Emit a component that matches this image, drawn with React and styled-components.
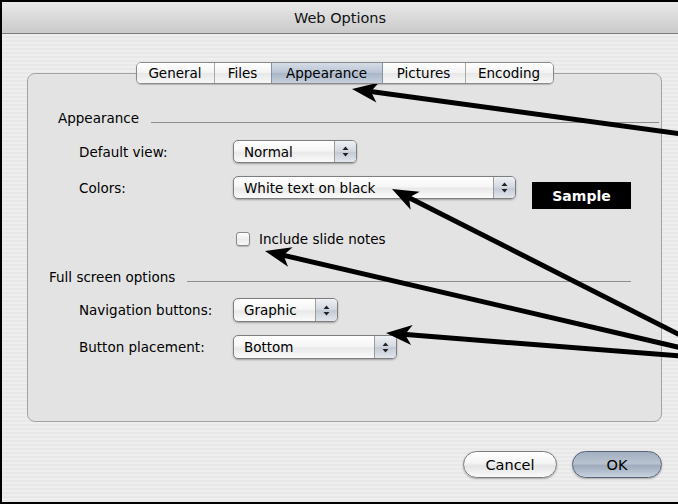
import React from "react";
import styled, { createGlobalStyle, css } from "styled-components";

const GlobalStyle = createGlobalStyle`
  html, body { margin: 0; padding: 0; background: #fff; }
  #root { width: 678px; height: 504px; }
`;

const TABS = [
  { label: "General", w: 77 },
  { label: "Files", w: 57 },
  { label: "Appearance", w: 111, active: true },
  { label: "Pictures", w: 83 },
  { label: "Encoding", w: 88 },
];

// callout arrows, page coordinates: [tailX, tailY, tipX, tipY]
const ARROWS = [
  [682, 134, 352, 89],
  [682, 336, 392, 189],
  [682, 348, 265, 251],
  [682, 356, 386, 333],
];

const arrowShape = ([fx, fy, tx, ty]) => {
  const len = 26, half = 10, notch = 7;
  const a = Math.atan2(ty - fy, tx - fx);
  const c = Math.cos(a), s = Math.sin(a);
  const bx = tx - c * len, by = ty - s * len;
  const nx = tx - c * (len - notch), ny = ty - s * (len - notch);
  const head = [
    [tx, ty],
    [bx - s * half, by + c * half],
    [nx, ny],
    [bx + s * half, by - c * half],
  ].map((p) => p.join(",")).join(" ");
  const ex = tx - c * (len - notch - 2), ey = ty - s * (len - notch - 2);
  return { line: { x1: fx, y1: fy, x2: ex, y2: ey }, head };
};

const StepperIcon = () => (
  <svg width="7" height="11" viewBox="0 0 7 11">
    <path d="M3.5 0.5 L6.5 4 L0.5 4 Z" fill="#222" />
    <path d="M3.5 10.5 L6.5 7 L0.5 7 Z" fill="#222" />
  </svg>
);

const Select = ({ value, w, h }) => (
  <Popup $w={w} $h={h}>
    <PopupText>{value}</PopupText>
    <Stepper>
      <StepperIcon />
    </Stepper>
  </Popup>
);

const App = () => {
  return (
    <>
      <GlobalStyle />
      <Window>
        <TitleBar>Web Options</TitleBar>
        <Body>
          <TabStrip>
            {TABS.map((t) => (
              <Tab key={t.label} $w={t.w} $active={t.active}>
                {t.label}
              </Tab>
            ))}
          </TabStrip>
          <Panel>
            <GroupHeader $indent={30} $gap={12} $endGap={2}>
              <span>Appearance</span>
              <Rule />
            </GroupHeader>

            <FieldRow $mt={14}>
              <Label>Default view:</Label>
              <Select value="Normal" w={124} />
            </FieldRow>

            <FieldRow $mt={13}>
              <Label>Colors:</Label>
              <Select value="White text on black" w={283} />
              <Sample>Sample</Sample>
            </FieldRow>

            <CheckRow $mt={22}>
              <Checkbox />
              <span>Include slide notes</span>
            </CheckRow>

            <GroupHeader $mt={22} $indent={21} $gap={12} $endGap={30}>
              <span>Full screen options</span>
              <Rule />
            </GroupHeader>

            <FieldRow $mt={13}>
              <Label $h={24}>Navigation buttons:</Label>
              <Select value="Graphic" w={105} h={24} />
            </FieldRow>

            <FieldRow $mt={13}>
              <Label $h={24}>Button placement:</Label>
              <Select value="Bottom" w={164} h={24} />
            </FieldRow>
          </Panel>

          <ButtonBar>
            <PushButton $w={94}>Cancel</PushButton>
            <PushButton $w={90} $default>OK</PushButton>
          </ButtonBar>
        </Body>

        <Callouts width="678" height="504" viewBox="0 0 678 504">
          {ARROWS.map((a, i) => {
            const { line, head } = arrowShape(a);
            return (
              <g key={i}>
                <line {...line} stroke="#000" strokeWidth="5" />
                <polygon points={head} fill="#000" />
              </g>
            );
          })}
        </Callouts>
      </Window>
    </>
  );
};

export default App;

const Window = styled.div`
  position: relative;
  width: 678px;
  height: 504px;
  box-sizing: border-box;
  border: 2px solid #000;
  border-right: none;
  display: flex;
  flex-direction: column;
  overflow: hidden;
  font-family: "DejaVu Sans", "Liberation Sans", sans-serif;
  font-size: 13.5px;
  color: #000;
  background: repeating-linear-gradient(
    to bottom,
    #eeeeee 0px,
    #eeeeee 2px,
    #e8e8e8 2px,
    #e8e8e8 4px
  );
`;

const TitleBar = styled.div`
  height: 31px;
  flex-shrink: 0;
  display: flex;
  align-items: center;
  justify-content: center;
  font-size: 14.5px;
  color: #111;
  border-bottom: 1px solid #7d7d7d;
  background: linear-gradient(to bottom, #e9e9e9, #d6d6d6 60%, #cbcbcb);
`;

const Body = styled.div`
  display: flex;
  flex-direction: column;
  padding: 28px 16px 0 25px;
`;

const TabStrip = styled.div`
  position: relative;
  z-index: 1;
  align-self: center;
  display: flex;
  margin-bottom: -11px;
  border: 1px solid #8a8a8a;
  border-radius: 5px;
  overflow: hidden;
  box-shadow: 0 1px 1px rgba(0, 0, 0, 0.2);
`;

const Tab = styled.div`
  width: ${(p) => p.$w}px;
  height: 20px;
  box-sizing: border-box;
  display: flex;
  align-items: center;
  justify-content: center;
  border-left: 1px solid #a9a9a9;
  background: linear-gradient(to bottom, #ffffff, #f3f3f3 50%, #e8e8e8 52%, #f7f7f7);

  &:first-child {
    border-left: none;
  }

  ${(p) =>
    p.$active &&
    css`
      background: linear-gradient(to bottom, #d5dce6, #b9c4d3 50%, #a9b6c8 52%, #c6d0dd);
      border-left-color: #8793a3;
      & + div {
        border-left-color: #8793a3;
      }
    `}
`;

const Panel = styled.div`
  height: 349px;
  box-sizing: border-box;
  display: flex;
  flex-direction: column;
  padding-top: 36px;
  border: 1px solid #a3a3a3;
  border-radius: 8px;
  background: #e3e3e3;
`;

const GroupHeader = styled.div`
  height: 16px;
  display: flex;
  align-items: center;
  gap: ${(p) => p.$gap}px;
  margin-top: ${(p) => p.$mt || 0}px;
  padding-left: ${(p) => p.$indent}px;
  padding-right: ${(p) => p.$endGap}px;
`;

const Rule = styled.div`
  flex: 1;
  height: 1px;
  margin-top: 8px;
  background: #8e8e8e;
`;

const FieldRow = styled.div`
  display: flex;
  align-items: flex-start;
  margin-top: ${(p) => p.$mt || 0}px;
  padding-left: 51px;
`;

const Label = styled.div`
  width: 154px;
  height: ${(p) => p.$h || 23}px;
  display: flex;
  align-items: center;
`;

const Popup = styled.div`
  width: ${(p) => p.$w}px;
  height: ${(p) => p.$h || 23}px;
  box-sizing: border-box;
  display: flex;
  border: 1px solid #7e7e7e;
  border-radius: 5px;
  overflow: hidden;
  background: linear-gradient(to bottom, #ffffff, #f6f6f6 45%, #e9e9e9 55%, #fbfbfb);
  box-shadow: 0 1px 2px rgba(0, 0, 0, 0.3);
`;

const PopupText = styled.span`
  flex: 1;
  display: flex;
  align-items: center;
  padding-left: 10px;
`;

const Stepper = styled.span`
  width: 21px;
  display: flex;
  align-items: center;
  justify-content: center;
  border-left: 1px solid #9c9c9c;
  background: linear-gradient(to bottom, #eef0f4, #d2d7df 50%, #c3cad5 52%, #e2e6ec);
`;

const Sample = styled.div`
  width: 99px;
  height: 27px;
  margin: 6px 0 0 16px;
  display: flex;
  align-items: center;
  justify-content: center;
  background: #000;
  color: #fff;
  font-size: 14px;
  font-weight: bold;
`;

const CheckRow = styled.div`
  height: 16px;
  display: flex;
  align-items: center;
  gap: 9px;
  margin-top: ${(p) => p.$mt || 0}px;
  padding-left: 208px;
`;

const Checkbox = styled.span`
  width: 14px;
  height: 14px;
  box-sizing: border-box;
  border: 1px solid #888;
  border-radius: 3px;
  background: linear-gradient(to bottom, #ffffff, #ececec 55%, #f8f8f8);
  box-shadow: 0 1px 1px rgba(0, 0, 0, 0.2);
`;

const ButtonBar = styled.div`
  display: flex;
  justify-content: flex-end;
  gap: 15px;
  margin-top: 29px;
`;

const PushButton = styled.div`
  width: ${(p) => p.$w}px;
  height: 27px;
  box-sizing: border-box;
  display: flex;
  align-items: center;
  justify-content: center;
  font-size: 14.5px;
  border-radius: 14px;
  border: 1px solid ${(p) => (p.$default ? "#56647a" : "#7b7b7b")};
  box-shadow: 0 1px 2px rgba(0, 0, 0, 0.3);
  background: ${(p) =>
    p.$default
      ? "linear-gradient(to bottom, #a3afc0, #b9c3d1 45%, #9eabbd 55%, #c9d2de)"
      : "linear-gradient(to bottom, #ffffff, #f4f4f4 45%, #e4e4e4 55%, #fafafa)"};
`;

const Callouts = styled.svg`
  position: absolute;
  left: -2px;
  top: -2px;
  pointer-events: none;
  overflow: visible;
`;
